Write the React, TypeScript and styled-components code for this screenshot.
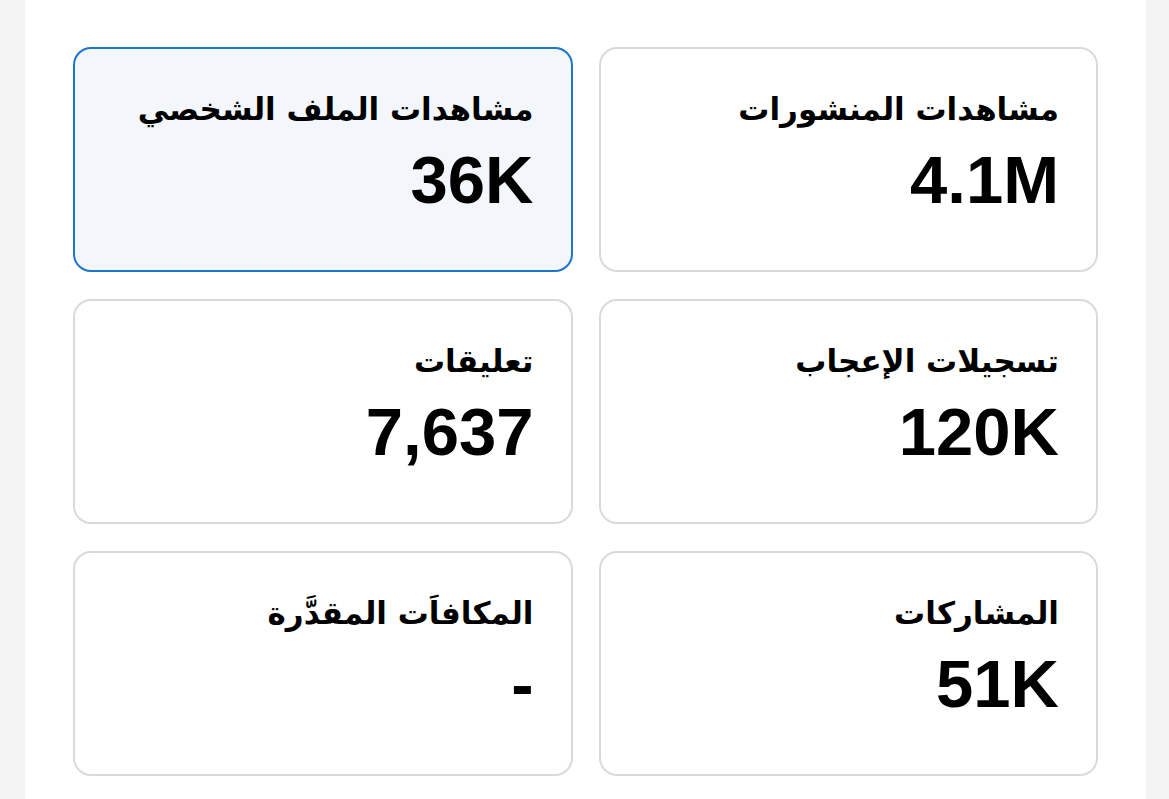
import React from "react";
import styled, { createGlobalStyle } from "styled-components";

const Global = createGlobalStyle`
  html, body { margin: 0; padding: 0; background: #f4f4f4; }
  body { font-family: "Liberation Sans", "DejaVu Sans", sans-serif; }
`;

const Panel = styled.main`
  margin-left: 25px;
  width: 1121px;
  min-height: 799px;
  background: #ffffff;
  box-sizing: border-box;
  padding: 47px 48px 0 48px;
`;

const Grid = styled.div`
  direction: rtl;
  display: grid;
  grid-template-columns: 1fr 1fr;
  column-gap: 26px;
  row-gap: 27px;
`;

const Card = styled.div<{ $active?: boolean }>`
  box-sizing: border-box;
  height: 225px;
  border-radius: 18px;
  border: 2px solid ${(p) => (p.$active ? "#1b76cc" : "#dadada")};
  background: ${(p) => (p.$active ? "#f3f7fc" : "#ffffff")};
  padding: 39px 37px 0 37px;
  display: flex;
  flex-direction: column;
  align-items: flex-start;
  gap: 13px;
`;

const Label = styled.div`
  font-family: "DejaVu Sans", "Noto Sans", sans-serif;
  font-weight: 700;
  font-size: 31px;
  line-height: 42px;
  color: #000;
`;

const Value = styled.div`
  direction: ltr;
  font-family: "Liberation Sans", Arial, sans-serif;
  font-weight: 700;
  font-size: 67px;
  line-height: 74px;
  color: #000;
`;

const stats = [
  { label: "مشاهدات المنشورات", value: "4.1M" },
  { label: "مشاهدات الملف الشخصي", value: "36K", active: true },
  { label: "تسجيلات الإعجاب", value: "120K" },
  { label: "تعليقات", value: "7,637" },
  { label: "المشاركات", value: "51K" },
  { label: "المكافاَت المقدَّرة", value: "-" },
];

export default function App() {
  return (
    <>
      <Global />
      <Panel>
        <Grid>
          {stats.map((s) => (
            <Card key={s.label} $active={s.active}>
              <Label>{s.label}</Label>
              <Value>{s.value}</Value>
            </Card>
          ))}
        </Grid>
      </Panel>
    </>
  );
}
